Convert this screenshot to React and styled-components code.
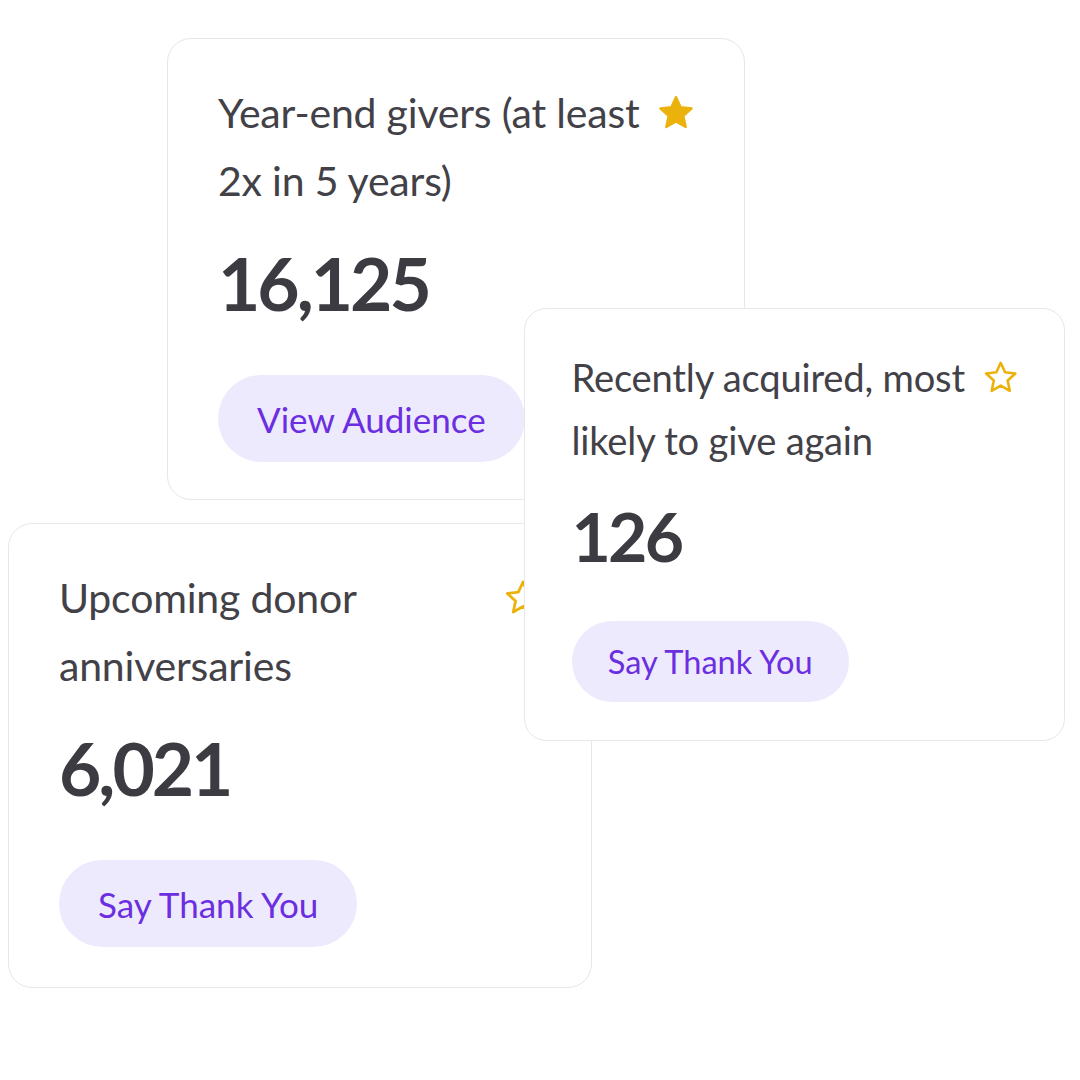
import React from "react";
import styled, { createGlobalStyle } from "styled-components";

const GlobalStyle = createGlobalStyle`
  html, body {
    margin: 0;
    padding: 0;
    background: #ffffff;
  }
  body {
    font-family: Lato, "Noto Sans", sans-serif;
  }
`;

const Canvas = styled.div`
  position: relative;
  width: 1080px;
  height: 1080px;
  overflow: hidden;
  background: #ffffff;
`;

const Slot = styled.div`
  position: absolute;
  left: ${(p) => p.$x}px;
  top: ${(p) => p.$y}px;
  z-index: ${(p) => p.$z};
`;

const Card = styled.div`
  zoom: ${(p) => p.$zoom};
  box-sizing: border-box;
  width: ${(p) => p.$w}px;
  display: flex;
  flex-direction: column;
  align-items: flex-start;
  padding: 40px 50px ${(p) => p.$pb}px 50px;
  background: #ffffff;
  border: 1px solid #e7e7ea;
  border-radius: 24px;
`;

const Header = styled.div`
  display: flex;
  align-items: flex-start;
  gap: 16px;
  width: 100%;
`;

const Title = styled.h3`
  flex: 1;
  margin: 0;
  font-family: Lato, "Noto Sans", sans-serif;
  font-weight: 400;
  font-size: 41px;
  line-height: 67.5px;
  color: #424147;
  letter-spacing: -0.2px;
`;

const Line = styled.span`
  display: block;
  white-space: nowrap;
`;

const StarBox = styled.div`
  flex-shrink: 0;
  width: 36px;
  height: 67.5px;
  display: flex;
  align-items: center;
  justify-content: center;
`;

const Count = styled.div`
  margin-top: 27px;
  font-family: Lato, "Noto Sans", sans-serif;
  font-weight: 700;
  font-size: 73px;
  line-height: 84px;
  letter-spacing: -3px;
  color: #3c3b41;
`;

const Action = styled.button`
  margin-top: 50px;
  height: 87px;
  padding: 0 39px;
  display: inline-flex;
  align-items: center;
  border: none;
  border-radius: 44px;
  background: #eeeafd;
  color: #6b2ee0;
  font-family: Lato, "Noto Sans", sans-serif;
  font-weight: 400;
  font-size: 35px;
  cursor: pointer;
`;

const Star = ({ filled }) => (
  <svg width="36" height="36" viewBox="1 1 22 22" aria-hidden="true">
    <polygon
      points="12,2.2 14.85,8.45 21.6,9.2 16.55,13.8 17.95,20.6 12,17.15 6.05,20.6 7.45,13.8 2.4,9.2 9.15,8.45"
      fill={filled ? "#ecb20c" : "none"}
      stroke="#ecb20c"
      strokeWidth={filled ? 1.4 : 1.7}
      strokeLinejoin="round"
    />
  </svg>
);

const cards = [
  {
    id: "year-end",
    x: 167,
    y: 38,
    z: 1,
    w: 578,
    pb: 37,
    zoom: 1,
    lines: ["Year-end givers (at least", "2x in 5 years)"],
    filled: true,
    count: "16,125",
    action: "View Audience",
  },
  {
    id: "anniversaries",
    x: 8,
    y: 523,
    z: 2,
    w: 584,
    pb: 40,
    zoom: 1,
    lines: ["Upcoming donor", "anniversaries"],
    filled: false,
    count: "6,021",
    action: "Say Thank You",
  },
  {
    id: "recent",
    x: 524,
    y: 308,
    z: 3,
    w: 582,
    pb: 40,
    zoom: 0.93,
    lines: ["Recently acquired, most", "likely to give again"],
    filled: false,
    count: "126",
    action: "Say Thank You",
  },
];

export default function App() {
  return (
    <>
      <GlobalStyle />
      <Canvas>
        {cards.map((c) => (
          <Slot key={c.id} $x={c.x} $y={c.y} $z={c.z}>
            <Card $w={c.w} $zoom={c.zoom} $pb={c.pb}>
              <Header>
                <Title>
                  {c.lines.map((l) => (
                    <Line key={l}>{l}</Line>
                  ))}
                </Title>
                <StarBox>
                  <Star filled={c.filled} />
                </StarBox>
              </Header>
              <Count>{c.count}</Count>
              <Action type="button">{c.action}</Action>
            </Card>
          </Slot>
        ))}
      </Canvas>
    </>
  );
}
